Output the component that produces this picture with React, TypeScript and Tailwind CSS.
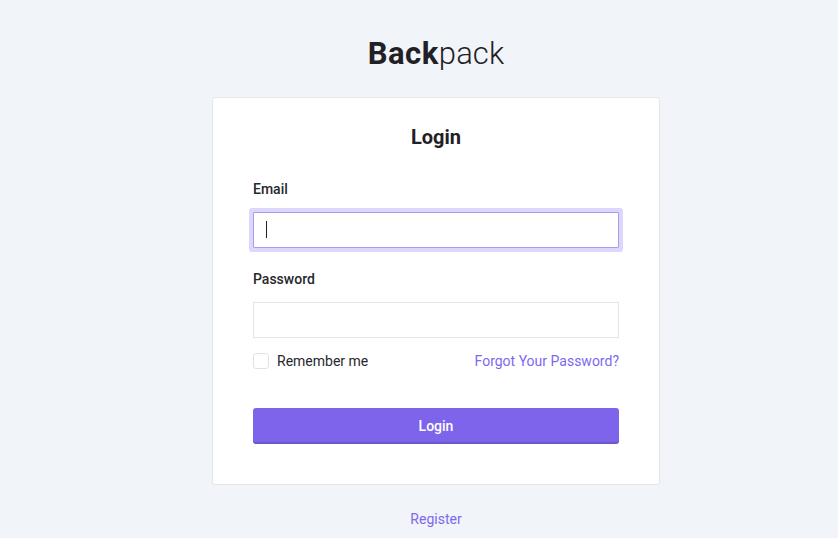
import React from "react";

export default function App() {
  return (
    <div
      className="min-h-screen w-full bg-[#f1f4f8] pl-[34px] flex flex-col items-center text-[#1f2126]"
      style={{ fontFamily: "Roboto, 'Noto Sans', sans-serif" }}
    >
      <div className="mt-[36px] h-[36px] leading-[36px] text-[31px]">
        <span className="font-bold text-[#231f26] tracking-[0.5px]">Back</span>
        <span className="font-light text-[#231f26] tracking-[0.1px]">pack</span>
      </div>

      <div className="mt-[25px] w-[448px] bg-white border border-[#e3e6ea] rounded-[3px] px-10 pt-[26.5px] pb-[40px]">
        <h1 className="text-center text-[20px] leading-[24px] font-bold text-[#1f2126]">Login</h1>

        <label className="block mt-[30.5px] text-[14px] leading-[20px] font-medium text-[#26282d]">Email</label>
        <div className="relative mt-[12.5px]">
          <input
            type="email"
            className="block w-full h-[36px] bg-white border border-[#a99bf3] rounded-[1px] outline-none ring-4 ring-[#ddd7fb] px-3 text-[14px]"
          />
          <span className="absolute left-[13px] top-[9px] w-px h-[17px] bg-[#1f2126]" />
        </div>

        <label className="block mt-[21.5px] text-[14px] leading-[20px] font-medium text-[#26282d]">Password</label>
        <input
          type="password"
          className="block mt-[12.5px] w-full h-[36px] bg-white border border-[#e1e3e7] rounded-[1px] outline-none px-3 text-[14px]"
        />

        <div className="mt-[13px] h-5 flex items-center justify-between text-[14px] leading-[20px]">
          <label className="flex items-center gap-[8px] text-[#26282d]">
            <span className="block w-4 h-4 rounded-[3px] border border-[#dfe2e6] bg-white" />
            <span>Remember me</span>
          </label>
          <a className="text-[#7c69ef]" href="#">Forgot Your Password?</a>
        </div>

        <button className="mt-[37px] w-full h-[36px] pt-[2px] rounded-[3px] bg-[#7e64ea] shadow-[inset_0_-2px_0_rgba(0,0,0,0.12)] text-white text-[14px] font-medium">
          Login
        </button>
      </div>

      <a href="#" className="mt-[24px] text-[14px] leading-[20px] text-[#7c69ef]">Register</a>
    </div>
  );
}
